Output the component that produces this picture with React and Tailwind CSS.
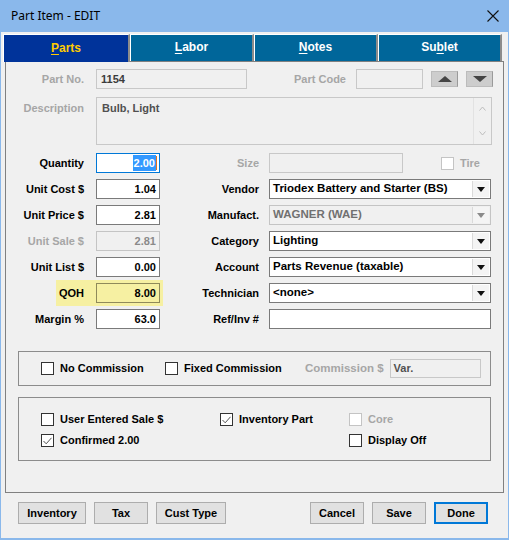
import React from "react";

const font = { fontFamily: '"Liberation Sans", Arial, sans-serif' };

function Check({ checked, disabled }) {
  return (
    <span
      className={
        "flex h-[13px] w-[13px] shrink-0 items-center justify-center border bg-white " +
        (disabled ? "border-[#c4c4c4]" : "border-[#333333]")
      }
    >
      {checked && (
        <svg width="9" height="8" viewBox="0 0 9 8">
          <path d="M0.5 4 L3.2 6.8 L8.5 0.8" fill="none" stroke="#555" strokeWidth="1" />
        </svg>
      )}
    </span>
  );
}

function CheckItem({ label, checked, disabled, className = "" }) {
  return (
    <div className={"flex items-center gap-[6px] " + className}>
      <Check checked={checked} disabled={disabled} />
      <span className={disabled ? "text-[#a6a6a6]" : "text-black"}>{label}</span>
    </div>
  );
}

function Select({ value, disabled }) {
  return (
    <div
      className={
        "flex h-[20px] w-[222px] items-stretch border " +
        (disabled ? "border-[#c4c4c4] bg-[#f0f0f0] text-[#707070]" : "border-[#7a7a7a] bg-white text-black")
      }
    >
      <span className="flex flex-1 items-center pl-[3px] text-[11.5px]">{value}</span>
      <span className="my-px mr-px flex w-[17px] items-center justify-center border-l border-[#dadada] bg-[#f4f4f4]">
        <svg width="8" height="5" viewBox="0 0 8 5">
          <path d="M0 0 H8 L4 5 Z" fill={disabled ? "#8a8a8a" : "#111"} />
        </svg>
      </span>
    </div>
  );
}

function NumInput({ value, disabled }) {
  return (
    <div
      className={
        "flex h-[20px] w-[64px] items-center justify-end border pr-[3px] " +
        (disabled ? "border-[#c4c4c4] bg-[#f0f0f0] text-[#8a8a8a]" : "border-[#7a7a7a] bg-white text-black")
      }
    >
      {value}
    </div>
  );
}

function FieldRow({ left, leftDisabled, leftValue, right, rightEl, rightDisabled, qoh, focus }) {
  return (
    <div className="flex h-[20px] items-center">
      <div className="flex w-[157px] items-center">
        {qoh ? (
          <div className="-my-[3px] ml-[50px] flex h-[26px] flex-1 items-center bg-[#f6f0a2] pr-[3px]">
            <span className="w-[28px] text-right">{left}</span>
            <div className="ml-[12px] flex h-[20px] w-[64px] items-center justify-end border border-[#8f8a5a] bg-[#f6f0a2] pr-[3px]">
              {leftValue}
            </div>
          </div>
        ) : (
          <>
            <span className={"w-[78px] text-right " + (leftDisabled ? "text-[#a6a6a6]" : "text-black")}>{left}</span>
            <div className="ml-[12px]">
              {focus ? (
                <div className="flex h-[20px] w-[64px] items-center justify-end border border-[#0078d7] bg-white pr-[2px]">
                  <span className="bg-[#3399ff] px-px text-white">{leftValue}</span>
                  <span className="h-[14px] w-px bg-[#e07020]" />
                </div>
              ) : (
                <NumInput value={leftValue} disabled={leftDisabled} />
              )}
            </div>
          </>
        )}
      </div>
      <span className={"w-[96px] text-right " + (rightDisabled ? "text-[#a6a6a6]" : "text-black")}>{right}</span>
      <div className="ml-[10px]">{rightEl}</div>
    </div>
  );
}

function Tab({ u, rest, pre = "", active, w }) {
  return (
    <div
      className={
        "flex items-center justify-center border-l border-t border-r-2 border-l-white border-t-white border-r-[#8c8c8c] pb-[2px] text-[12px] font-bold " +
        (active ? "h-[28px] bg-[#00339a] text-[#ffcc00]" : "h-[27px] bg-[#00669a] text-white")
      }
      style={{ width: w }}
    >
      {pre}
      <span className="underline underline-offset-2">{u}</span>
      {rest}
    </div>
  );
}

function Btn({ label, w, primary }) {
  return (
    <div
      className={
        "flex h-[22px] items-center justify-center bg-[#e1e1e1] " +
        (primary ? "border-2 border-[#0078d7]" : "border border-[#adadad]")
      }
      style={{ width: w }}
    >
      {label}
    </div>
  );
}

export default function App() {
  return (
    <div className="flex h-[540px] w-[509px] flex-col bg-[#8ab8eb] pb-[2px] pl-px pr-px text-[11px] font-bold" style={font}>
      {/* Title bar */}
      <div className="flex h-[32px] shrink-0 items-center justify-between pl-[10px] pr-[9px]">
        <span className="text-[12px] font-normal text-black" style={{ fontFamily: '"Noto Sans", "Open Sans", sans-serif' }}>
          Part Item - EDIT
        </span>
        <svg width="12" height="12" viewBox="0 0 12 12">
          <path d="M0.5 0.5 L11.5 11.5 M11.5 0.5 L0.5 11.5" stroke="#111" strokeWidth="1.1" />
        </svg>
      </div>

      <div className="flex flex-1 flex-col bg-[#f0f0f0] pl-[2px] pt-[2px]">
        {/* Tabs */}
        <div className="relative z-10 flex items-start">
          <Tab u="P" rest="arts" active w={127} />
          <Tab u="L" rest="abor" w={124} />
          <Tab u="N" rest="otes" w={124} />
          <Tab pre="Su" u="b" rest="let" w={124} />
        </div>

        {/* Panel */}
        <div className="-mt-px ml-[2px] flex h-[432px] w-[499px] flex-col border border-[#808080] pt-[7px]">
          {/* Part No row */}
          <div className="flex h-[20px] items-center">
            <span className="w-[78px] text-right text-[#a6a6a6]">Part No.</span>
            <div className="ml-[12px] flex h-[20px] w-[151px] items-center border border-[#c8c8c8] pl-[4px] text-[#3c3c3c]">1154</div>
            <span className="w-[99px] text-right text-[#a6a6a6]">Part Code</span>
            <div className="ml-[10px] h-[20px] w-[67px] border border-[#c8c8c8]" />
            <div className="ml-[8px] flex h-[16px] w-[27px] items-center justify-center border border-[#bcbcbc] border-r-[#9a9a9a] bg-[#cdcdcd]">
              <svg width="14" height="6" viewBox="0 0 14 6"><path d="M7 0 L14 6 H0 Z" fill="#444" /></svg>
            </div>
            <div className="ml-[8px] flex h-[16px] w-[27px] items-center justify-center border border-[#bcbcbc] border-r-[#9a9a9a] bg-[#cdcdcd]">
              <svg width="14" height="6" viewBox="0 0 14 6"><path d="M0 0 H14 L7 6 Z" fill="#444" /></svg>
            </div>
          </div>

          {/* Description */}
          <div className="mt-[8px] flex h-[48px]">
            <span className="mt-[3px] w-[78px] text-right text-[#a6a6a6]">Description</span>
            <div className="ml-[12px] flex h-[48px] w-[396px] border border-[#c8c8c8]">
              <span className="flex-1 pl-[5px] pt-[2px] text-[#505050]">Bulb, Light</span>
              <div className="flex w-[18px] flex-col items-center justify-between border-l border-[#e2e2e2] py-[8px]">
                <svg width="7" height="5" viewBox="0 0 7 5"><path d="M0.5 4.5 L3.5 1 L6.5 4.5" fill="none" stroke="#bdbdbd" /></svg>
                <svg width="7" height="5" viewBox="0 0 7 5"><path d="M0.5 0.5 L3.5 4 L6.5 0.5" fill="none" stroke="#bdbdbd" /></svg>
              </div>
            </div>
          </div>

          {/* Fields */}
          <div className="mt-[8px] flex flex-col gap-[6px]">
            <FieldRow
              left="Quantity"
              leftValue="2.00"
              focus
              right="Size"
              rightDisabled
              rightEl={
                <div className="flex items-center">
                  <div className="h-[20px] w-[134px] border border-[#c8c8c8]" />
                  <CheckItem label="Tire" disabled className="ml-[38px]" />
                </div>
              }
            />
            <FieldRow left="Unit Cost $" leftValue="1.04" right="Vendor" rightEl={<Select value="Triodex Battery and Starter (BS)" />} />
            <FieldRow left="Unit Price $" leftValue="2.81" right="Manufact." rightEl={<Select value="WAGNER (WAE)" disabled />} />
            <FieldRow left="Unit Sale $" leftValue="2.81" leftDisabled right="Category" rightEl={<Select value="Lighting" />} />
            <FieldRow left="Unit List $" leftValue="0.00" right="Account" rightEl={<Select value="Parts Revenue (taxable)" />} />
            <FieldRow left="QOH" leftValue="8.00" qoh right="Technician" rightEl={<Select value="<none>" />} />
            <FieldRow
              left="Margin %"
              leftValue="63.0"
              right="Ref/Inv #"
              rightEl={<div className="h-[20px] w-[222px] border border-[#7a7a7a] bg-white" />}
            />
          </div>

          {/* Commission group */}
          <div className="ml-[12px] mt-[22px] flex h-[35px] w-[473px] items-center border border-[#8c8c8c] pl-[22px]">
            <CheckItem label="No Commission" className="w-[124px]" />
            <CheckItem label="Fixed Commission" className="w-[140px]" />
            <span className="text-[11.5px] text-[#a6a6a6]">Commission $</span>
            <div className="ml-[6px] flex h-[19px] w-[91px] items-center border border-[#c8c8c8] pl-[3px] text-[#505050]">Var.</div>
          </div>

          {/* Options group */}
          <div className="ml-[12px] mt-[11px] flex h-[64px] w-[473px] flex-col gap-[8px] border border-[#8c8c8c] pl-[22px] pt-[15px]">
            <div className="flex h-[13px] items-center">
              <CheckItem label="User Entered Sale $" className="w-[179px]" />
              <CheckItem label="Inventory Part" checked className="w-[129px]" />
              <CheckItem label="Core" disabled />
            </div>
            <div className="flex h-[13px] items-center">
              <CheckItem label="Confirmed 2.00" checked className="w-[308px]" />
              <CheckItem label="Display Off" />
            </div>
          </div>
        </div>

        {/* Buttons */}
        <div className="mt-[9px] flex items-center pl-[15px]">
          <Btn label="Inventory" w={68} />
          <div className="ml-[8px]"><Btn label="Tax" w={54} /></div>
          <div className="ml-[8px]"><Btn label="Cust Type" w={70} /></div>
          <div className="ml-[84px]"><Btn label="Cancel" w={54} /></div>
          <div className="ml-[8px]"><Btn label="Save" w={54} /></div>
          <div className="ml-[8px]"><Btn label="Done" w={54} primary /></div>
        </div>
      </div>
    </div>
  );
}
